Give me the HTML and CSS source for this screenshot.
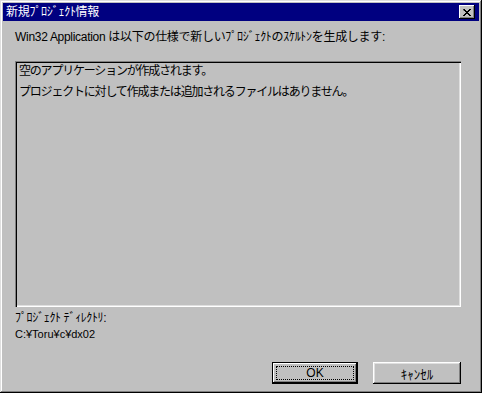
FILE: index.html
```html
<!DOCTYPE html>
<html lang="ja">
<head>
    <meta charset="UTF-8">
    <title>新規プロジェクト情報</title>
    <link rel="stylesheet" href="styles.css">
</head>
<body>
    <div class="window">
        <div class="titlebar">
            <span class="title">新規ﾌﾟﾛｼﾞｪｸﾄ情報</span>
            <button class="close-btn">
                <svg width="8" height="7" viewBox="0 0 8 7">
                    <path d="M0 0h2v1h1v1h2v-1h1v-1h2v1h-1v1h-1v1h-1v1h1v1h1v1h1v1h-2v-1h-1v-1h-2v1h-1v1h-2v-1h1v-1h1v-1h1v-1h-1v-1h-1z" fill="#000"/>
                </svg>
            </button>
        </div>

        <div class="content">
            <p class="intro">Win32 Application は以下の仕様で新しいﾌﾟﾛｼﾞｪｸﾄのｽｹﾙﾄﾝを生成します:</p>

            <div class="info-box">
                <p>空のアプリケーションが作成されます。</p>
                <p>プロジェクトに対して作成または追加されるファイルはありません。</p>
            </div>

            <p class="dir-label">ﾌﾟﾛｼﾞｪｸﾄ ﾃﾞｨﾚｸﾄﾘ:</p>
            <p class="dir-path">C:¥Toru¥c¥dx02</p>

            <div class="buttons">
                <button class="btn default"><span class="focus">OK</span></button>
                <button class="btn cancel">ｷｬﾝｾﾙ</button>
            </div>
        </div>
    </div>
</body>
</html>
```

FILE: styles.css
```css
body {
    margin: 0;
    background: #c0c0c0;
    font-family: "Liberation Sans", "Noto Sans CJK JP", sans-serif;
    font-size: 12px;
    color: #000;
}

.window {
    width: 482px;
    height: 393px;
    box-sizing: border-box;
    padding: 3px;
    background: #c0c0c0;
    box-shadow: inset -1px -1px 0 #000, inset 1px 1px 0 #dfdfdf,
                inset -2px -2px 0 #808080, inset 2px 2px 0 #fff;
    display: flex;
    flex-direction: column;
}

.titlebar {
    height: 18px;
    background: #000080;
    display: flex;
    align-items: center;
    justify-content: space-between;
    padding: 0 4px 0 3px;
}

.title {
    color: #fff;
    font-size: 12px;
    line-height: 18px;
    letter-spacing: -0.3px;
}

.close-btn {
    width: 16px;
    height: 14px;
    padding: 0;
    border: none;
    background: #c0c0c0;
    box-shadow: inset -1px -1px 0 #000, inset 1px 1px 0 #fff,
                inset -2px -2px 0 #808080;
    display: flex;
    align-items: center;
    justify-content: center;
}

.content {
    flex: 1;
    display: flex;
    flex-direction: column;
    padding: 0 18px 6px 12px;
}

p {
    margin: 0;
}

.intro {
    margin-top: 8px;
    line-height: 16px;
    letter-spacing: -0.3px;
}

.info-box {
    margin-top: 16px;
    height: 246px;
    box-sizing: border-box;
    padding: 2px 4px;
    box-shadow: inset 1px 1px 0 #808080, inset 2px 2px 0 #000,
                inset -1px -1px 0 #fff, inset -2px -2px 0 #dfdfdf;
}

.info-box p {
    line-height: 16px;
    margin-bottom: 5px;
    letter-spacing: -1.2px;
}

.dir-label {
    margin-top: 3px;
    line-height: 16px;
    letter-spacing: -0.4px;
}

.dir-path {
    line-height: 16px;
    font-size: 11px;
}

.buttons {
    margin-top: auto;
    display: flex;
    justify-content: flex-end;
    gap: 15px;
}

.btn {
    width: 88px;
    height: 22px;
    padding: 0;
    border: none;
    background: #c0c0c0;
    font-family: inherit;
    font-size: 12px;
    box-shadow: inset -1px -1px 0 #000, inset 1px 1px 0 #fff,
                inset -2px -2px 0 #808080, inset 2px 2px 0 #dfdfdf;
}

.btn.cancel {
    font-size: 13px;
}

.btn.default {
    width: 86px;
    box-shadow: inset 0 0 0 1px #000, inset -2px -2px 0 #000, inset 2px 2px 0 #fff,
                inset -3px -3px 0 #808080;
    display: flex;
    padding: 4px;
}

.focus {
    flex: 1;
    border: 1px dotted #000;
    display: flex;
    align-items: center;
    justify-content: center;
    line-height: 12px;
}
```
